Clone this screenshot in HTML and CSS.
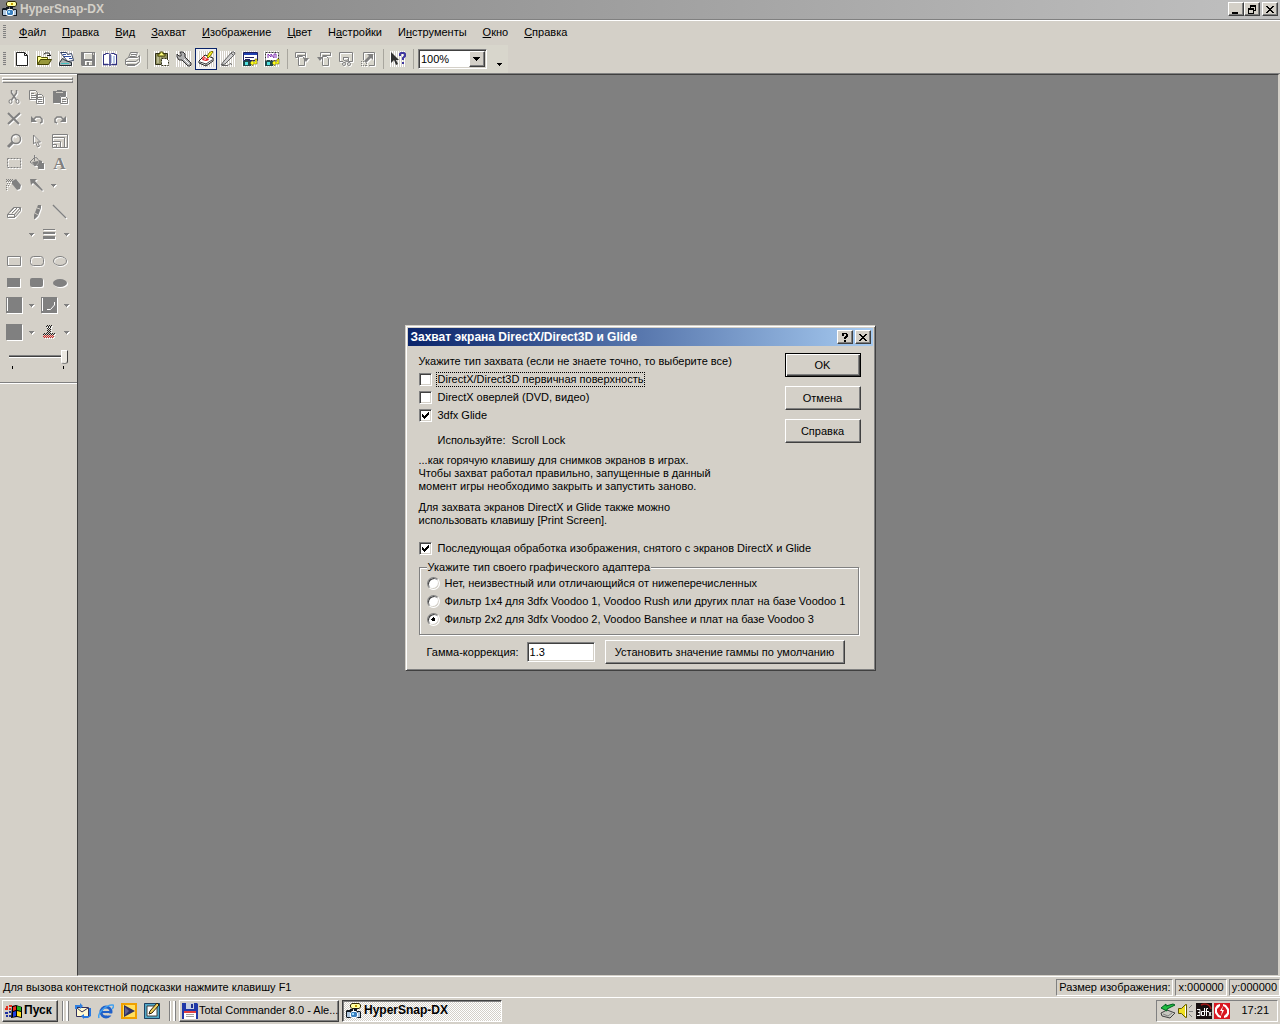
FILE: index.html
```html
<!DOCTYPE html>
<html lang="ru">
<head>
  <meta charset="UTF-8" />
  <meta name="viewport" content="width=device-width, initial-scale=1.0"/>
  <title>HyperSnap-DX</title>
  <link rel="stylesheet" href="styles.css">
</head>
<body>

  <!-- ICONS -->
  <svg class="sprite" aria-hidden="true">
    <symbol id="i-camera" viewBox="0 0 16 16">
      <path d="M6 0h7l2 2v2l-2 2H6L4 4V2z" fill="#302800"/><path d="M6 1h7l1 1v2l-1 1H6L5 4V2z" fill="#ffffa0"/><path d="M9 2h2v2H9z" fill="#c8a000"/>
      <path d="M8 5h3v3H8zM1 7h3V6h3v2h7l1 1v6H1L0 14V8z" fill="#101820"/>
      <path d="M1 9h3v5H1zM12 9h2v5h-2z" fill="#b0c8e0"/><path d="M6 8h4l2 2v4l-2 1H6l-2-1v-4z" fill="#fff"/><path d="M6 9h4l1 1v3l-1 1H6l-1-1v-3z" fill="#3a80c0"/><path d="M6 10h2v2H6z" fill="#a0e0ff"/>
    </symbol>
    <symbol id="i-new" viewBox="0 0 16 16"><path d="M2.500 1.500h8l3 3v10h-11z" fill="#fff" stroke="#202020"/><path d="M10.500 1.500v3h3" fill="none" stroke="#202020"/></symbol>
    <symbol id="i-open" viewBox="0 0 16 16"><path d="M1.500 13.500v-8h3l1 1h6v3" fill="#ffff90" stroke="#505000"/><path d="M1.500 13.500l3-5h11l-3 5z" fill="#98983c" stroke="#404000"/><path d="M8 3.500l1-1.500h4l1 2M11 4.500h4" fill="none" stroke="#202020"/></symbol>
    <symbol id="i-scan" viewBox="0 0 16 16"><path d="M2.500 1.500h6l1 2 4-1 2 7-6 1z" fill="#fff" stroke="#304060"/><path d="M5 3.500h3M6 5.500h4M10 5.500h3M11 7.500h3" stroke="#3050a0"/><path d="M1.500 14.500v-3l3-4 3 2 6 2v3z" fill="#a8b0b0" stroke="#202830"/><path d="M3 12.500h8" stroke="#40c0c0"/></symbol>
    <symbol id="i-save" viewBox="0 0 16 16"><path d="M1 1h14v14H2l-1-1zM4 2v6h8V2zM5 10v4h2v-3h2v3h3v-4z" fill="#808080" fill-rule="evenodd"/><path d="M13 2h1v2h-1z" fill="#d4d0c8"/></symbol>
    <symbol id="i-book" viewBox="0 0 16 16"><path d="M1.500 3.500h2v-1h3l1.500 1 1.500-1h3v1h2v10h-5l-1.500 1-1.500-1h-5z" fill="#fff" stroke="#303080"/><path d="M8 4v10M1 13.500h5M10 13.500h5" stroke="#303080" stroke-width="1.500"/><path d="M9 4h1v8H9zM11 5h2v7h-2z" fill="#b8c8e8"/></symbol>
    <symbol id="i-print" viewBox="0 0 16 16"><path d="M4.500 6.500l2-5h7l-2 5M1.500 8.500l3-2h9l2-2v6l-3 3h-11zM1 10.500h11l3-3M3 13.500v1h8l3-3M7 3.500h5M6 5.500h5" fill="none" stroke="#808080"/></symbol>
    <symbol id="i-clip" viewBox="0 0 16 16"><path d="M1.500 2.500h12v11h-12z" fill="#909060" stroke="#303018"/><path d="M4 5V3h2V1h3v2h2v2z" fill="#ffff80" stroke="#404000"/><path d="M3 6h2v6H3zM6 6h1v2H6z" fill="#b8b890"/><path d="M7.500 7.500h5l2 2v5h-7z" fill="#fff" stroke="#303018" stroke-dasharray="2 1"/></symbol>
    <symbol id="i-wrench" viewBox="0 0 16 16"><path d="M1 3l2 2h2V3L4 1h3l2 2v3l6 6v2l-1 1h-2L6 9H3L1 6z" fill="#b0b0b0" stroke="#303030"/><path d="M8 8l5 5" stroke="#fff"/></symbol>
    <symbol id="i-dx" viewBox="0 0 16 16"><path d="M1 10l6-6 8 3v3l-7 5-7-3z" fill="#fff" stroke="#202020"/><path d="M2 11l6 2 6-4M8 13v2" fill="none" stroke="#404040"/><path d="M5 7l2 2 3-2 1 2-3 1-4-1z" fill="#e02020"/><path d="M5 5l5 4M4 7h3" stroke="#e02020"/><path d="M9 6l2-4 3-2 1 1-3 4-2 2z" fill="#ffff20" stroke="#807000"/></symbol>
    <symbol id="i-stylus" viewBox="0 0 16 16"><path d="M1 14l4-1 9-9 1-2-1-1h-2L4 10z" fill="#d0d0d0" stroke="#606060"/><path d="M2 14.500h6l2-2 2 1M11 2l3 3" fill="none" stroke="#606060"/></symbol>
    <symbol id="i-capwin" viewBox="0 0 16 16"><path d="M1.500 1.500h14v8h-14z" fill="#fff" stroke="#202060"/><path d="M2 2h13v2H2z" fill="#2040b0"/><path d="M3 6.500h9M3 8.500h5" stroke="#202060"/><path d="M1 10h2V9h3v1h3v5H1z" fill="#204848"/><path d="M3 11h3v3H3z" fill="#50e0e0"/><path d="M8 12l3-3v2h2V8h2v5h-4v2z" fill="#ffff20" stroke="#504800" stroke-width=".5"/></symbol>
    <symbol id="i-capreg" viewBox="0 0 16 16"><path d="M1.500 1.500h13v8h-13z" fill="#fff" stroke="#303030" stroke-dasharray="2 1"/><path d="M4 7V3l3 3V3l3 4V3h2v4" fill="none" stroke="#8030b0"/><path d="M1 10h2V9h3v1h3v5H1z" fill="#204848"/><path d="M3 11h3v3H3z" fill="#50e0e0"/><path d="M8 12l3-3v2h2V8h2v5h-4v2z" fill="#ffff20" stroke="#504800" stroke-width=".5"/></symbol>
    <symbol id="i-rotr" viewBox="0 0 16 16"><path d="M1.500 6.500v-5h10v5M1.500 6.500h2v-2h8M4.500 5.500h4l2 2v7h-6z" fill="none" stroke="#808080"/><path d="M9 7h6l-3 4z" fill="#808080"/></symbol>
    <symbol id="i-rotl" viewBox="0 0 16 16"><path d="M14.500 5V1.500h-10v4M14.500 4.500h-8M6.500 5.500h4l2 2v7h-6z" fill="none" stroke="#808080"/><path d="M1 6h6l-3 4z" fill="#808080"/></symbol>
    <symbol id="i-crop" viewBox="0 0 16 16"><path d="M5 10.500H1.500v-9h13v9h-4v-4h-5M5.500 6v3l5 2M10.500 8l-4 4" fill="none" stroke="#808080"/><circle cx="6" cy="13" r="1.500" fill="none" stroke="#808080"/><circle cx="11" cy="13" r="1.500" fill="none" stroke="#808080"/></symbol>
    <symbol id="i-resize" viewBox="0 0 16 16"><path d="M3.500 9V1.500h11v13H9" fill="none" stroke="#808080"/><path d="M7 3h6v6l-2-2-5 5-2-2 5-5z" fill="#808080"/><path d="M1 10.500h6M1 14.500h6M1.500 10v5M6.500 10v5" stroke="#808080" stroke-dasharray="1 1"/></symbol>
    <symbol id="i-help" viewBox="0 0 16 16"><path d="M1 1v11l3-3 2 5 2-1-2-4h3z" fill="#303030"/><path d="M10 5V3l1-1h3l1 1v2l-2 2v2M13 11v2" fill="none" stroke="#4038a0" stroke-width="2"/></symbol>
    <symbol id="i-down" viewBox="0 0 7 4"><path d="M0 0h7v1H6v1H5v1H4v1H3V3H2V2H1V1H0z"/></symbol>
    <symbol id="i-down5" viewBox="0 0 5 3"><path d="M0 0h5v1H4v1H3v1H2V2H1V1H0z"/></symbol>

    <symbol id="t-cut" viewBox="0 0 16 16"><path d="M5.500 1v3l5 7M10.500 1v3l-5 7" fill="none" stroke="#808080" stroke-width="1.500"/><ellipse cx="4.500" cy="12.500" rx="1.500" ry="2" fill="none" stroke="#808080"/><ellipse cx="11.500" cy="12.500" rx="1.500" ry="2" fill="none" stroke="#808080"/></symbol>
    <symbol id="t-copy" viewBox="0 0 16 16"><path d="M.500 1.500h6l2 2v7h-8zM2 4.500h3M2 6.500h5M2 8.500h5M7.500 5.500h5l2 2v7h-7zM9 8.500h4M9 10.500h4M9 12.500h4" fill="none" stroke="#808080"/></symbol>
    <symbol id="t-paste" viewBox="0 0 16 16"><path d="M1 2h4V1h5v1h4v5H8v7H1z" fill="#808080"/><path d="M4 3h7v1H4z" fill="#d4d0c8"/><path d="M8.500 7.500h5l2 2v5h-7zM10 10.500h4M10 12.500h4" fill="none" stroke="#808080"/></symbol>
    <symbol id="t-del" viewBox="0 0 16 16"><path d="M2 2l11 11M14 2L2 13" stroke="#808080" stroke-width="2"/></symbol>
    <symbol id="t-undo" viewBox="0 0 16 16"><path d="M2 5v6h6z" fill="#808080"/><path d="M4 9l3-3h4l2 2v3l-2 1" fill="none" stroke="#808080" stroke-width="1.500"/></symbol>
    <symbol id="t-redo" viewBox="0 0 16 16"><path d="M14 5v6H8z" fill="#808080"/><path d="M12 9L9 6H5L3 8v3l2 1" fill="none" stroke="#808080" stroke-width="1.500"/></symbol>
    <symbol id="t-zoom" viewBox="0 0 16 16"><circle cx="10" cy="6" r="4.500" fill="none" stroke="#808080" stroke-width="1.500"/><path d="M7 9l-5 5" stroke="#808080" stroke-width="3"/><path d="M8 4l2-1" stroke="#fff"/></symbol>
    <symbol id="t-arrow" viewBox="0 0 16 16"><path d="M4.500 2v9l2-2 2 5 2-1-2-4h3z" fill="none" stroke="#808080"/></symbol>
    <symbol id="t-scale" viewBox="0 0 16 16"><path d="M.500 1.500h15v13H.500zM.500 4.500h12v10M.500 8.500h8v6M.500 11.500h4v3" fill="none" stroke="#808080"/></symbol>
    <symbol id="t-select" viewBox="0 0 16 16"><path d="M1.500 3.500h13v9h-13z" fill="none" stroke="#808080" stroke-dasharray="2 1"/></symbol>
    <symbol id="t-fill" viewBox="0 0 16 16"><path d="M1 7l5-5 2 1 3 4-5 4z" fill="#d4d0c8" stroke="#808080"/><path d="M3 7l6-1 1 1-4 4zM10 5l3 1v2h2v6H9v-3H7l3-3z" fill="#808080"/><path d="M5.500 0v6" stroke="#808080"/></symbol>
    <symbol id="t-spray" viewBox="0 0 16 16"><path d="M6 4l4-2 5 6-1 4-3 1-5-6z" fill="#808080"/><path d="M0 2.500h7M1 3.500h5M0 4.500h5M1 6.500h3M0 8.500h3M0 10.500h2M0 12.500h2" stroke="#808080" stroke-dasharray="1 1"/></symbol>
    <symbol id="t-ptr" viewBox="0 0 16 16"><path d="M1 2h7L6 4l8 9-1 1-9-8-2 2z" fill="#808080"/></symbol>
    <symbol id="t-eraser" viewBox="0 0 16 16"><path d="M1.500 10.500l6-7h7v3l-6 7h-7zM1.500 10.500h7l6-7M8.500 10.500v3M4 8l5-5M6 9l6-6" fill="none" stroke="#808080"/></symbol>
    <symbol id="t-pencil" viewBox="0 0 16 16"><path d="M9 1h3v3l-3 8-3 3H5v-4z" fill="#808080"/><path d="M8 4l3 1M6 9l3 2" stroke="#d4d0c8"/></symbol>
    <symbol id="t-line" viewBox="0 0 16 16"><path d="M1 1l13 13" stroke="#808080" stroke-width="1.500"/></symbol>
    <symbol id="t-lines" viewBox="0 0 16 16"><path d="M2 3h12v1H2zM2 6h12v2H2zM2 10h12v3H2z" fill="#808080"/></symbol>
    <symbol id="t-rect" viewBox="0 0 16 16"><path d="M1.500 3.500h13v9h-13z" fill="none" stroke="#808080"/></symbol>
    <symbol id="t-rrect" viewBox="0 0 16 16"><rect x="1.500" y="3.500" width="13" height="9" rx="3" fill="none" stroke="#808080"/></symbol>
    <symbol id="t-oval" viewBox="0 0 16 16"><ellipse cx="8" cy="8" rx="6.500" ry="4.500" fill="none" stroke="#808080"/></symbol>
    <symbol id="t-frect" viewBox="0 0 16 16"><path d="M1 3h13v9H1z" fill="#808080"/></symbol>
    <symbol id="t-frrect" viewBox="0 0 16 16"><rect x="1" y="3" width="13" height="9" rx="2" fill="#808080"/></symbol>
    <symbol id="t-foval" viewBox="0 0 16 16"><ellipse cx="8" cy="8" rx="7" ry="4" fill="#808080"/></symbol>
    <symbol id="t-fore" viewBox="0 0 16 16"><path d="M0 0h16v16H0z" fill="#808080"/><path d="M1 1h1v13H1z" fill="#fff"/></symbol>
    <symbol id="t-curve" viewBox="0 0 16 16"><path d="M0 0h16v16H0z" fill="#808080"/><path d="M1 1h1v13H1z" fill="#fff"/><path d="M13.500 5v3l-4 4.500H6" fill="none" stroke="#fff"/></symbol>
    <symbol id="t-back" viewBox="0 0 16 16"><path d="M0 0h16v16H0z" fill="#808080"/></symbol>
    <symbol id="t-stamp" viewBox="0 0 16 16"><path d="M6 1.500h5M7 3.500h3M7 5.500h3M7 7.500h3M3 9.500h11" stroke="#202020" stroke-dasharray="1 1"/><path d="M5 2.500h5M6 4.500h4M6 6.500h4M6 8.500h4M2 10.500h12" stroke="#202020" stroke-dasharray="1 1"/><path d="M3 11.500h10M3 13.500h10" stroke="#d02020" stroke-dasharray="1 1"/><path d="M2 12.500h12" stroke="#d02020" stroke-dasharray="1 1"/></symbol>

    <symbol id="i-win" viewBox="0 0 18 16"><path d="M7 3l4-1 6 2v11l-5-1-6 1z" fill="#000"/><path d="M8 4l3-1v4L8 8z" fill="#f03020"/><path d="M12 3l4 1v4l-4-1z" fill="#20b020"/><path d="M8 9l3-1v5l-3 1z" fill="#2040e0"/><path d="M12 8l4 1v5l-4-1z" fill="#ffe020"/><path d="M1 4h2M4 3h3M0 6h3M4 6h2" stroke="#e03020" stroke-width="2"/><path d="M0 10h3M4 9h2M1 13h2M4 13h2" stroke="#2030a0" stroke-width="2"/></symbol>
    <symbol id="i-mail" viewBox="0 0 16 16"><path d="M1.500 4.500h12v9h-12z" fill="#fff8d0" stroke="#303060"/><path d="M2 5l5 4 6-4" fill="none" stroke="#303060"/><path d="M0 6V2h5V0l3 3-3 3V4H2v2z" fill="#3080e0"/><path d="M14 5h2v8l-3 2H9v1l-3-3 3-2v2h5z" fill="#2878e0"/></symbol>
    <symbol id="i-ie" viewBox="0 0 16 16"><circle cx="8" cy="9" r="5" fill="none" stroke="#2060c8" stroke-width="3"/><path d="M4 9h9" stroke="#2060c8" stroke-width="2"/><path d="M9 10.500h6v2H9z" fill="#d4d0c8"/><path d="M1 15C-1 10 9 1 15 2c1 1 0 3-1 4" fill="none" stroke="#40a0f0" stroke-width="1.500"/></symbol>
    <symbol id="i-media" viewBox="0 0 16 16"><path d="M1 1h14v14H1z" fill="#ffe060" stroke="#f0a000" stroke-width="2"/><path d="M3 2l11 6-11 6z" fill="#303060"/><path d="M4 4v8l4-4z" fill="#606090"/></symbol>
    <symbol id="i-desk" viewBox="0 0 16 16"><path d="M0 0h16v16H0z" fill="#50a8c8"/><path d="M.500 .500h15v15H.500z" fill="none" stroke="#204060"/><path d="M3 3h10v10H3z" fill="#fff" stroke="#404040"/><path d="M6 8l7-8 2 2-7 8-3 1z" fill="#f0d060" stroke="#302000"/></symbol>
    <symbol id="i-disk" viewBox="0 0 16 16"><path d="M0 0h15l1 1v15H0z" fill="#2038a8"/><path d="M4 0h8v6H4z" fill="#c8d0e0"/><path d="M9 1h2v4H9z" fill="#203090"/><path d="M2 8h12v8H2z" fill="#fff"/><path d="M2 8h12v2H2z" fill="#e04040"/><path d="M4 11.500h8M4 13.500h8" stroke="#a0a0a0"/></symbol>
    <symbol id="i-eject" viewBox="0 0 16 16"><path d="M1 10l6-3 8 3-5 5-8-2z" fill="#c8c8c0" stroke="#404040"/><path d="M3 11l5 2 4-3" fill="none" stroke="#808080"/><path d="M1 5l5-4v2l7-2 2 1-8 4v2z" fill="#20c040" stroke="#006020"/></symbol>
    <symbol id="i-sound" viewBox="0 0 16 16"><path d="M.500 5.500h3l4-4h1v13h-1l-4-4h-3z" fill="#f0e020" stroke="#605800"/><path d="M7.500 3v10" stroke="#fff"/><path d="M11 5l3-3M11 8.500h4M11 11l3 3" stroke="#808080"/></symbol>
    <symbol id="i-3dfx" viewBox="0 0 16 16"><path d="M0 0h16v16H0z" fill="#181010"/><path d="M5 2c4-2 9-1 10 4" fill="none" stroke="#a01818" stroke-width="1.500"/><path d="M1 6.500h3v6H1M2 9.500h2M8.500 5v7.500h-3v-4h3M12 5.500h-1.500V13M9.500 8.500H13M13 9l2 4M15 9l-2 4" fill="none" stroke="#fff"/></symbol>
    <symbol id="i-av" viewBox="0 0 16 16"><path d="M0 0h16v16H0z" fill="#d81820"/><path d="M6 1L3 2 1 5v5l3 4 3 1v-2l-2-1-2-3V6l3-3zM10 15l3-1 2-3V6l-3-4-3-1v2l2 1 2 3v3l-3 3z" fill="#fff"/><path d="M9 3L6 8h2l-1 5 3-6H8z" fill="#fff"/></symbol>
  </svg>

  <header class="title-bar">
    <svg class="icon"><use href="#i-camera"/></svg>
    <h1>HyperSnap-DX</h1>
    <div class="window-buttons">
      <button aria-label="Свернуть"><svg viewBox="0 0 10 9"><path d="M1 7h6v2H1z"/></svg></button>
      <button aria-label="Восстановить"><svg viewBox="0 0 10 9"><path d="M3 0h6v6H7v3H1V3h2zM4 2v1h3v2h1V2zM2 5v3h4V5z" fill-rule="evenodd"/></svg></button>
      <button class="close" aria-label="Закрыть"><svg viewBox="0 0 10 9"><path d="M1 1h2v1h1v1h2V2h1V1h2v1H8v1H7v1H6v1h1v1h1v1h1v1H7V7H6V6H4v1H3v1H1V7h1V6h1V5h1V4H3V3H2V2H1z"/></svg></button>
    </div>
  </header>

  <nav class="menu-bar">
    <span class="grip"></span>
    <button><u>Ф</u>айл</button>
    <button><u>П</u>равка</button>
    <button><u>В</u>ид</button>
    <button><u>З</u>ахват</button>
    <button><u>И</u>зображение</button>
    <button><u>Ц</u>вет</button>
    <button>Н<u>а</u>стройки</button>
    <button>И<u>н</u>струменты</button>
    <button><u>О</u>кно</button>
    <button><u>С</u>правка</button>
  </nav>

  <div class="tool-bar">
    <span class="grip"></span>
    <button class="tool lit" aria-label="Создать"><svg class="icon"><use href="#i-new"/></svg></button>
    <button class="tool lit" aria-label="Открыть"><svg class="icon"><use href="#i-open"/></svg></button>
    <button class="tool lit" aria-label="Сканировать"><svg class="icon"><use href="#i-scan"/></svg></button>
    <button class="tool off" aria-label="Сохранить" disabled><svg class="icon"><use href="#i-save"/></svg></button>
    <button class="tool lit" aria-label="Просмотр"><svg class="icon"><use href="#i-book"/></svg></button>
    <button class="tool off" aria-label="Печать" disabled><svg class="icon"><use href="#i-print"/></svg></button>
    <span class="sep"></span>
    <button class="tool lit" aria-label="Вставить"><svg class="icon"><use href="#i-clip"/></svg></button>
    <button class="tool lit" aria-label="Параметры захвата"><svg class="icon"><use href="#i-wrench"/></svg></button>
    <button class="tool lit active" aria-label="Захват DirectX"><svg class="icon"><use href="#i-dx"/></svg></button>
    <button class="tool lit" aria-label="Перо"><svg class="icon"><use href="#i-stylus"/></svg></button>
    <button class="tool lit" aria-label="Захват окна"><svg class="icon"><use href="#i-capwin"/></svg></button>
    <button class="tool lit" aria-label="Захват области"><svg class="icon"><use href="#i-capreg"/></svg></button>
    <span class="sep"></span>
    <button class="tool off" aria-label="Повернуть вправо" disabled><svg class="icon"><use href="#i-rotr"/></svg></button>
    <button class="tool off" aria-label="Повернуть влево" disabled><svg class="icon"><use href="#i-rotl"/></svg></button>
    <button class="tool off" aria-label="Обрезать" disabled><svg class="icon"><use href="#i-crop"/></svg></button>
    <button class="tool off" aria-label="Размер" disabled><svg class="icon"><use href="#i-resize"/></svg></button>
    <span class="sep"></span>
    <button class="tool lit" aria-label="Контекстная справка"><svg class="icon"><use href="#i-help"/></svg></button>
    <span class="sep"></span>
    <span class="combo">
      <select aria-label="Масштаб">
        <option>100%</option>
        <option>200%</option>
      </select>
      <span class="combo-arrow"><svg><use href="#i-down"/></svg></span>
    </span>
    <button class="more" aria-label="Ещё"><svg><use href="#i-down5"/></svg></button>
  </div>

  <div class="main">
    <aside class="palette">
      <div class="palette-grip"><span></span><span></span></div>
      <div class="palette-row">
        <button aria-label="Вырезать" disabled><svg class="icon"><use href="#t-cut"/></svg></button>
        <button aria-label="Копировать" disabled><svg class="icon"><use href="#t-copy"/></svg></button>
        <button aria-label="Вставить" disabled><svg class="icon"><use href="#t-paste"/></svg></button>
      </div>
      <div class="palette-row">
        <button aria-label="Удалить" disabled><svg class="icon"><use href="#t-del"/></svg></button>
        <button aria-label="Отменить" disabled><svg class="icon"><use href="#t-undo"/></svg></button>
        <button aria-label="Повторить" disabled><svg class="icon"><use href="#t-redo"/></svg></button>
      </div>
      <div class="palette-row">
        <button aria-label="Лупа" disabled><svg class="icon"><use href="#t-zoom"/></svg></button>
        <button aria-label="Указатель" disabled><svg class="icon"><use href="#t-arrow"/></svg></button>
        <button aria-label="Масштаб" disabled><svg class="icon"><use href="#t-scale"/></svg></button>
      </div>
      <div class="palette-row">
        <button aria-label="Выделение" disabled><svg class="icon"><use href="#t-select"/></svg></button>
        <button aria-label="Заливка" disabled><svg class="icon"><use href="#t-fill"/></svg></button>
        <button class="letter" aria-label="Текст" disabled>A</button>
      </div>
      <div class="palette-row">
        <button aria-label="Распылитель" disabled><svg class="icon"><use href="#t-spray"/></svg></button>
        <button aria-label="Стрелка" disabled><svg class="icon"><use href="#t-ptr"/></svg></button>
        <button class="drop" aria-label="Вид стрелки" disabled><svg><use href="#i-down5"/></svg></button>
      </div>
      <div class="palette-row group">
        <button aria-label="Ластик" disabled><svg class="icon"><use href="#t-eraser"/></svg></button>
        <button aria-label="Карандаш" disabled><svg class="icon"><use href="#t-pencil"/></svg></button>
        <button aria-label="Линия" disabled><svg class="icon"><use href="#t-line"/></svg></button>
      </div>
      <div class="palette-row pairs">
        <span class="blank"></span>
        <button class="drop" aria-label="Кисть" disabled><svg><use href="#i-down5"/></svg></button>
        <button aria-label="Толщина" disabled><svg class="icon"><use href="#t-lines"/></svg></button>
        <button class="drop" aria-label="Выбор толщины" disabled><svg><use href="#i-down5"/></svg></button>
      </div>
      <div class="palette-row group">
        <button aria-label="Прямоугольник" disabled><svg class="icon"><use href="#t-rect"/></svg></button>
        <button aria-label="Скруглённый прямоугольник" disabled><svg class="icon"><use href="#t-rrect"/></svg></button>
        <button aria-label="Эллипс" disabled><svg class="icon"><use href="#t-oval"/></svg></button>
      </div>
      <div class="palette-row">
        <button aria-label="Залитый прямоугольник" disabled><svg class="icon"><use href="#t-frect"/></svg></button>
        <button aria-label="Залитый скруглённый прямоугольник" disabled><svg class="icon"><use href="#t-frrect"/></svg></button>
        <button aria-label="Залитый эллипс" disabled><svg class="icon"><use href="#t-foval"/></svg></button>
      </div>
      <div class="palette-row pairs">
        <button aria-label="Цвет линии" disabled><svg class="icon"><use href="#t-fore"/></svg></button>
        <button class="drop" aria-label="Выбор цвета линии" disabled><svg><use href="#i-down5"/></svg></button>
        <button aria-label="Цвет кривой" disabled><svg class="icon"><use href="#t-curve"/></svg></button>
        <button class="drop" aria-label="Выбор цвета кривой" disabled><svg><use href="#i-down5"/></svg></button>
      </div>
      <div class="palette-row pairs group">
        <button aria-label="Цвет фона" disabled><svg class="icon"><use href="#t-back"/></svg></button>
        <button class="drop" aria-label="Выбор цвета фона" disabled><svg><use href="#i-down5"/></svg></button>
        <button aria-label="Штамп" disabled><svg class="icon"><use href="#t-stamp"/></svg></button>
        <button class="drop" aria-label="Выбор штампа" disabled><svg><use href="#i-down5"/></svg></button>
      </div>
      <div class="slider">
        <input type="range" min="0" max="100" value="100" aria-label="Прозрачность">
        <div class="ticks"><span></span><span></span></div>
      </div>
    </aside>
    <main class="workspace"></main>
  </div>

  <div class="status-bar">
    <span class="hint">Для вызова контекстной подсказки нажмите клавишу F1</span>
    <span class="panel">Размер изображения:</span>
    <span class="panel">x:000000</span>
    <span class="panel">y:000000</span>
  </div>

  <footer class="task-bar">
    <button class="start"><svg><use href="#i-win"/></svg>Пуск</button>
    <span class="divider"></span>
    <div class="quick">
      <a href="#" aria-label="Почта"><svg class="icon"><use href="#i-mail"/></svg></a>
      <a href="#" aria-label="Браузер"><svg class="icon"><use href="#i-ie"/></svg></a>
      <a href="#" aria-label="Проигрыватель"><svg class="icon"><use href="#i-media"/></svg></a>
      <a href="#" aria-label="Рабочий стол"><svg class="icon"><use href="#i-desk"/></svg></a>
    </div>
    <span class="divider"></span>
    <button class="task"><svg class="icon"><use href="#i-disk"/></svg>Total Commander 8.0 - Ale...</button>
    <button class="task current"><svg class="icon"><use href="#i-camera"/></svg>HyperSnap-DX</button>
    <div class="tray">
      <svg class="icon"><use href="#i-eject"/></svg>
      <svg class="icon"><use href="#i-sound"/></svg>
      <svg class="icon"><use href="#i-3dfx"/></svg>
      <svg class="icon"><use href="#i-av"/></svg>
      <time>17:21</time>
    </div>
  </footer>

  <!-- DIALOG -->
  <div class="overlay">
    <form class="dialog" role="dialog" aria-labelledby="dialogTitle">
      <div class="dialog-title">
        <h2 id="dialogTitle">Захват экрана DirectX/Direct3D и Glide</h2>
        <div class="window-buttons">
          <button type="button" aria-label="Что это такое?"><svg viewBox="0 0 10 9"><path d="M2 0h5v1h1v3H7v1H6v1H4V4h1V3h1V1H4v2H2zM4 7h2v2H4z"/></svg></button>
          <button type="button" class="close" aria-label="Закрыть"><svg viewBox="0 0 10 9"><path d="M1 1h2v1h1v1h2V2h1V1h2v1H8v1H7v1H6v1h1v1h1v1h1v1H7V7H6V6H4v1H3v1H1V7h1V6h1V5h1V4H3V3H2V2H1z"/></svg></button>
        </div>
      </div>
      <div class="dialog-body">
        <div class="dialog-top">
          <div class="options">
            <p>Укажите тип захвата (если не знаете точно, то выберите все)</p>
            <label class="choice"><input type="checkbox"><span class="focused">DirectX/Direct3D первичная поверхность</span></label>
            <label class="choice"><input type="checkbox"><span>DirectX оверлей (DVD, видео)</span></label>
            <label class="choice"><input type="checkbox" checked><span>3dfx Glide</span></label>
            <p class="hotkey"><span>Используйте:</span><span>Scroll Lock</span></p>
            <p class="note">...как горячую клавишу для снимков экранов в играх.<br>Чтобы захват работал правильно, запущенные в данный<br>момент игры необходимо закрыть и запустить заново.</p>
            <p class="note">Для захвата экранов DirectX и Glide также можно<br>использовать клавишу [Print Screen].</p>
          </div>
          <div class="actions">
            <button type="button" class="btn default">OK</button>
            <button type="button" class="btn">Отмена</button>
            <button type="button" class="btn">Справка</button>
          </div>
        </div>
        <label class="choice post"><input type="checkbox" checked><span>Последующая обработка изображения, снятого с экранов DirectX и Glide</span></label>
        <fieldset>
          <legend>Укажите тип своего графического адаптера</legend>
          <label class="choice"><input type="radio" name="adapter"><span>Нет, неизвестный или отличающийся от нижеперечисленных</span></label>
          <label class="choice"><input type="radio" name="adapter"><span>Фильтр 1x4 для 3dfx Voodoo 1, Voodoo Rush или других плат на базе Voodoo 1</span></label>
          <label class="choice"><input type="radio" name="adapter" checked><span>Фильтр 2x2 для 3dfx Voodoo 2, Voodoo Banshee и плат на базе Voodoo 3</span></label>
        </fieldset>
        <div class="gamma">
          <label for="gamma">Гамма-коррекция:</label>
          <input type="text" id="gamma" value="1.3">
          <button type="button" class="btn wide">Установить значение гаммы по умолчанию</button>
        </div>
      </div>
    </form>
  </div>

</body>
</html>
```
FILE: styles.css
```css
* { box-sizing: border-box; }
body {
  margin: 0;
  height: 100vh;
  display: flex;
  flex-direction: column;
  overflow: hidden;
  background: #d4d0c8;
  color: #000;
  font: 11px/13px "Liberation Sans", Arial, sans-serif;
}
h1, h2, p { margin: 0; font-size: 11px; }
button, input, select {
  font: inherit;
  color: inherit;
  padding: 0;
  margin: 0;
  border: none;
  border-radius: 0;
  background: none;
}
svg { display: block; flex: none; }
.sprite { position: absolute; width: 0; height: 0; }
.icon { width: 16px; height: 16px; }

/* title bars */
.title-bar {
  display: flex;
  align-items: center;
  height: 20px;
  padding: 0 2px 1px 2px;
  gap: 2px;
  background: linear-gradient(90deg, #808080, #c0c0c0);
  border-bottom: 1px solid #808080;
}
.title-bar h1 { flex: 1; color: #d4d0c8; font-size: 12px; }
.window-buttons { display: flex; }
.window-buttons button {
  width: 16px;
  height: 14px;
  padding: 1px 2px;
  background: #d4d0c8;
  border: 1px solid;
  border-color: #fff #404040 #404040 #fff;
  box-shadow: inset -1px -1px 0 #808080;
}
.window-buttons svg { width: 10px; height: 9px; }
.window-buttons .close { margin-left: 2px; }

/* menu and toolbar */
.menu-bar {
  display: flex;
  align-items: center;
  gap: 16px;
  height: 25px;
  padding: 0 4px 2px 3px;
  border-top: 1px solid #fff;
}
.menu-bar .grip { margin-right: -3px; }
.grip {
  width: 3px;
  height: 14px;
  background: repeating-linear-gradient(#808080 0 1px, #d4d0c8 1px 2px);
}
.tool-bar {
  display: flex;
  align-items: center;
  height: 28px;
  padding-left: 3px;
  background: linear-gradient(90deg, #d8d6cc 0 508px, #d4d0c8 508px);
}
.tool-bar .grip { margin-right: 5px; }
.tool {
  width: 22px;
  height: 22px;
  padding: 3px;
}
.lit .icon { background: repeating-linear-gradient(90deg, #fff 0 1px, #d4d0c8 1px 2px); }
.active { background: #f0f0f0; border: 1px solid #0a246a; padding: 2px; }
.off svg, .palette button svg { filter: drop-shadow(1px 1px 0 #fff); }
.sep {
  width: 8px;
  height: 20px;
  background: linear-gradient(90deg, transparent 4px, #a8a69e 4px 5px, transparent 5px);
}
.combo {
  display: flex;
  position: relative;
  margin-left: 1px;
  width: 69px;
  height: 20px;
  background: #fff;
  border: 1px solid;
  border-color: #808080 #fff #fff #808080;
  box-shadow: inset 1px 1px 0 #404040, inset -1px -1px 0 #d4d0c8;
}
.combo select {
  appearance: none;
  width: 100%;
  padding-left: 2px;
  font-size: 11px;
}
.combo-arrow {
  position: absolute;
  right: 1px;
  top: 1px;
  width: 16px;
  height: 16px;
  padding: 5px 3px;
  background: #d4d0c8;
  border: 1px solid;
  border-color: #fff #404040 #404040 #fff;
  box-shadow: inset -1px -1px 0 #808080;
  pointer-events: none;
}
.combo-arrow svg { width: 7px; height: 4px; }
.more { padding: 10px 10px 0; }
.more svg { width: 5px; height: 3px; }

/* work area */
.main { flex: 1; display: flex; min-height: 0; border-top: 1px solid #808080; }
.palette { width: 77px; padding: 2px 3px 0 2px; border-top: 1px solid #fff; }
.palette-grip { display: grid; padding-bottom: 3px; margin-right: 1px; }
.palette-grip span {
  height: 3px;
  border: 1px solid;
  border-color: #fff #808080 #808080 #fff;
}
.palette-row { display: flex; height: 22px; }
.palette-row.group { margin-top: 5px; }
.palette-row button {
  display: flex;
  align-items: center;
  justify-content: center;
  width: 23px;
  height: 22px;
  fill: #808080;
}
.palette-row.pairs button, .blank { width: 24px; }
.palette-row button.drop, .palette-row.pairs button.drop { width: 11px; }
.drop svg { width: 5px; height: 3px; }
.palette-row .letter {
  color: #808080;
  font: bold 17px/17px "Liberation Serif", serif;
  text-shadow: 1px 1px 0 #fff;
}
.slider {
  margin: 0 -3px;
  padding: 7px 6px 13px;
  border-bottom: 1px solid #808080;
  box-shadow: 0 1px 0 #fff;
}
.slider input {
  appearance: none;
  display: block;
  width: 59px;
  height: 14px;
  margin-left: 4px;
  background: linear-gradient(transparent 5px, #808080 5px 6px, #404040 6px 7px, #fff 7px 8px, transparent 8px);
}
.slider input::-webkit-slider-thumb {
  appearance: none;
  width: 7px;
  height: 14px;
  background: #ece9e2;
  border: 1px solid;
  border-color: #fff #404040 #808080 #fff;
  border-radius: 0 0 3px 3px;
}
.ticks { display: flex; justify-content: space-between; width: 52px; margin: 2px 0 0 7px; }
.ticks span { width: 1px; height: 3px; background: #000; }
.workspace {
  flex: 1;
  margin-right: 1px;
  background: #808080;
  border: 1px solid;
  border-color: #404040 #d4d0c8 #d4d0c8 #404040;
}

/* status bar */
.status-bar {
  display: flex;
  align-items: center;
  gap: 2px;
  height: 21px;
  padding: 1px 0 1px 3px;
  border-top: 1px solid #fff;
}
.hint { flex: 1; }
.panel {
  height: 17px;
  padding: 1px 2px;
  border: 1px solid;
  border-color: #808080 #fff #fff #808080;
}

/* taskbar */
.task-bar {
  display: flex;
  align-items: center;
  height: 27px;
  padding: 0 2px 1px;
  border-top: 1px solid #fff;
}
.start, .task {
  display: flex;
  align-items: center;
  height: 22px;
  padding: 0 2px;
  gap: 1px;
  border: 1px solid;
  border-color: #fff #404040 #404040 #fff;
  box-shadow: inset -1px -1px 0 #808080;
  white-space: nowrap;
}
.start { width: 56px; font-weight: bold; font-size: 12px; }
.start svg { width: 18px; height: 16px; }
.divider {
  width: 6px;
  height: 20px;
  margin: 0 4px;
  border-left: 1px solid #808080;
  border-right: 2px solid #fff;
  box-shadow: inset 1px 0 0 #fff, 1px 0 0 #808080;
}
.quick { display: flex; gap: 7px; padding: 0 5px 0 3px; }
.task { width: 160px; margin-right: 3px; }
.task.current {
  padding: 0 3px;
  gap: 2px;
  font-weight: bold;
  font-size: 12px;
  border-color: #404040 #fff #fff #404040;
  box-shadow: inset 1px 1px 0 #808080;
  background: repeating-conic-gradient(#fff 0 25%, #d4d0c8 0 50%) 0 0 / 2px 2px;
}
.tray {
  display: flex;
  align-items: center;
  gap: 2px;
  height: 22px;
  margin-left: auto;
  padding: 0 8px 0 3px;
  border: 1px solid;
  border-color: #808080 #fff #fff #808080;
}
.tray time { margin-left: 9px; }

/* dialog */
.overlay {
  position: fixed;
  inset: 0 0 28px 0;
  display: grid;
  place-items: center;
}
.dialog {
  width: 471px;
  padding: 1px;
  background: #d4d0c8;
  border: 1px solid;
  border-color: #d4d0c8 #404040 #404040 #d4d0c8;
  box-shadow: inset 1px 1px 0 #fff, inset -1px -1px 0 #808080;
}
.dialog-title {
  display: flex;
  align-items: center;
  justify-content: space-between;
  height: 18px;
  margin: 1px 1px 0;
  padding: 0 2px 0 3px;
  color: #fff;
  background: linear-gradient(90deg, #0a246a, #a6caf0);
}
.dialog-title h2 { font-size: 12px; }
.dialog-body { padding: 7px 13px 5px 12px; }
.dialog-top { display: flex; }
.options { flex: 1; padding-top: 2px; }
.choice {
  display: flex;
  align-items: center;
  height: 18px;
  gap: 5px;
}
.options > .choice:nth-of-type(1) { margin-top: 2px; }
.choice span { padding: 0 1px; }
.choice .focused { outline: 1px dotted #000; }
.choice input {
  appearance: none;
  flex: none;
  width: 13px;
  height: 13px;
  background: #fff;
  border: 1px solid;
  border-color: #808080 #fff #fff #808080;
  box-shadow: inset 1px 1px 0 #404040, inset -1px -1px 0 #d4d0c8;
}
.choice input[type="checkbox"]:checked {
  background-image: url("data:image/svg+xml,%3Csvg xmlns='http://www.w3.org/2000/svg' viewBox='0 0 11 11'%3E%3Cpath shape-rendering='crispEdges' d='M2 4h1v1h1v1h1V5h1V4h1V3h1V2h1v3H8v1H7v1H6v1H5v1H4V8H3V7H2z'/%3E%3C/svg%3E");
}
.choice input[type="radio"] { border-radius: 50%; }
.choice input[type="radio"]:checked { background: radial-gradient(circle, #000 0 2px, #fff 2px); }
.hotkey { display: flex; gap: 6px; margin: 10px 0 7px 19px; }
.note { margin-bottom: 8px; }
.actions { display: flex; flex-direction: column; gap: 9px; width: 76px; }
.btn {
  height: 24px;
  border: 1px solid;
  border-color: #fff #404040 #404040 #fff;
  box-shadow: inset -1px -1px 0 #808080;
  background: #d4d0c8;
}
.btn.default {
  border-color: #000;
  box-shadow: inset 1px 1px 0 #fff, inset -1px -1px 0 #404040, inset -2px -2px 0 #808080;
}
.post { margin-top: 4px; }
fieldset {
  margin: 4px 2px 5px 0;
  padding: 0 7px 6px;
  border: 1px solid #808080;
  box-shadow: 1px 1px 0 #fff, inset 1px 1px 0 #fff;
}
legend { padding: 0 1px; background: #d4d0c8; }
fieldset .choice { gap: 4px; }
.gamma { display: flex; align-items: center; padding-left: 8px; }
.gamma input {
  width: 68px;
  height: 20px;
  margin: 0 10px 0 8px;
  padding: 0 2px;
  background: #fff;
  border: 1px solid;
  border-color: #808080 #fff #fff #808080;
  box-shadow: inset 1px 1px 0 #404040, inset -1px -1px 0 #d4d0c8;
}
.wide { width: 240px; }
```
